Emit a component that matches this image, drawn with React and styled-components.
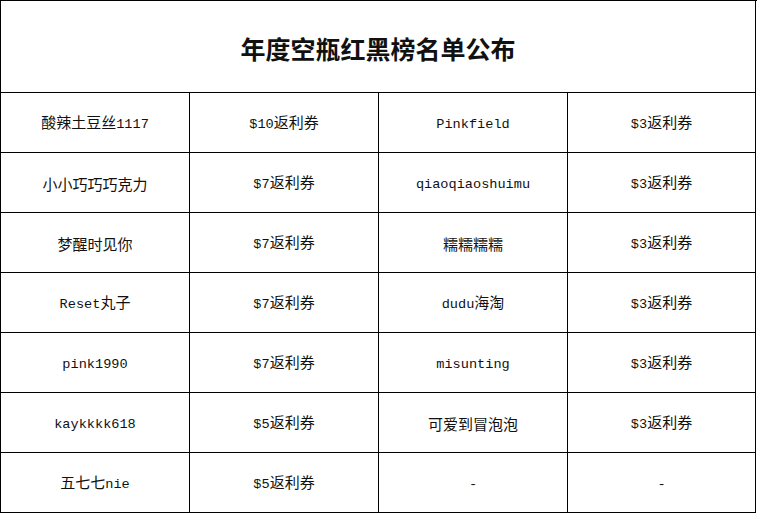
import React from "react";
import styled, { createGlobalStyle } from "styled-components";

const GlobalStyle = createGlobalStyle`
  html, body {
    margin: 0;
    padding: 0;
    background: #ffffff;
  }
  body {
    font-family: "Noto Sans CJK SC", "Liberation Sans", sans-serif;
    color: #000;
  }
`;

const Board = styled.div`
  display: grid;
  grid-template-columns: 189px 189px 189px 188px;
  grid-template-rows: 92px repeat(7, 60px);
  width: 756px;
  border-top: 1px solid #000;
  border-left: 1px solid #000;
`;

const TitleCell = styled.div`
  grid-column: 1 / -1;
  display: flex;
  align-items: center;
  justify-content: center;
  border-right: 1px solid #000;
  border-bottom: 1px solid #000;
  font-family: "Noto Sans CJK SC", sans-serif;
  font-size: 25px;
  font-weight: 700;
  color: #111;
  padding-top: 2px;
`;

const Cell = styled.div`
  display: flex;
  align-items: center;
  justify-content: center;
  border-right: 1px solid #000;
  border-bottom: 1px solid #000;
  font-family: "Noto Sans CJK SC", sans-serif;
  font-size: 15px;
  font-weight: 400;
  color: #111;
  white-space: nowrap;
  padding-top: 2px;
`;

const Text = styled.span`
  display: inline-block;
  line-height: 20px;
`;

const Latin = styled.span`
  font-family: "Liberation Mono", "DejaVu Sans Mono", monospace;
  font-size: 13.6px;
`;

const rows = [
  ["酸辣土豆丝1117", "$10返利券", "Pinkfield", "$3返利券"],
  ["小小巧巧巧克力", "$7返利券", "qiaoqiaoshuimu", "$3返利券"],
  ["梦醒时见你", "$7返利券", "糯糯糯糯", "$3返利券"],
  ["Reset丸子", "$7返利券", "dudu海淘", "$3返利券"],
  ["pink1990", "$7返利券", "misunting", "$3返利券"],
  ["kaykkkk618", "$5返利券", "可爱到冒泡泡", "$3返利券"],
  ["五七七nie", "$5返利券", "-", "-"],
];

function Mixed({ text }) {
  const parts = text.match(/[\x00-\x7F]+|[^\x00-\x7F]+/g) || [];
  return (
    <Text>
      {parts.map((p, i) =>
        /^[\x00-\x7F]+$/.test(p) ? <Latin key={i}>{p}</Latin> : <React.Fragment key={i}>{p}</React.Fragment>
      )}
    </Text>
  );
}

export default function App() {
  return (
    <>
      <GlobalStyle />
      <Board>
        <TitleCell>年度空瓶红黑榜名单公布</TitleCell>
        {rows.map((r, ri) =>
          r.map((c, ci) => (
            <Cell key={`${ri}-${ci}`}>
              <Mixed text={c} />
            </Cell>
          ))
        )}
      </Board>
    </>
  );
}
